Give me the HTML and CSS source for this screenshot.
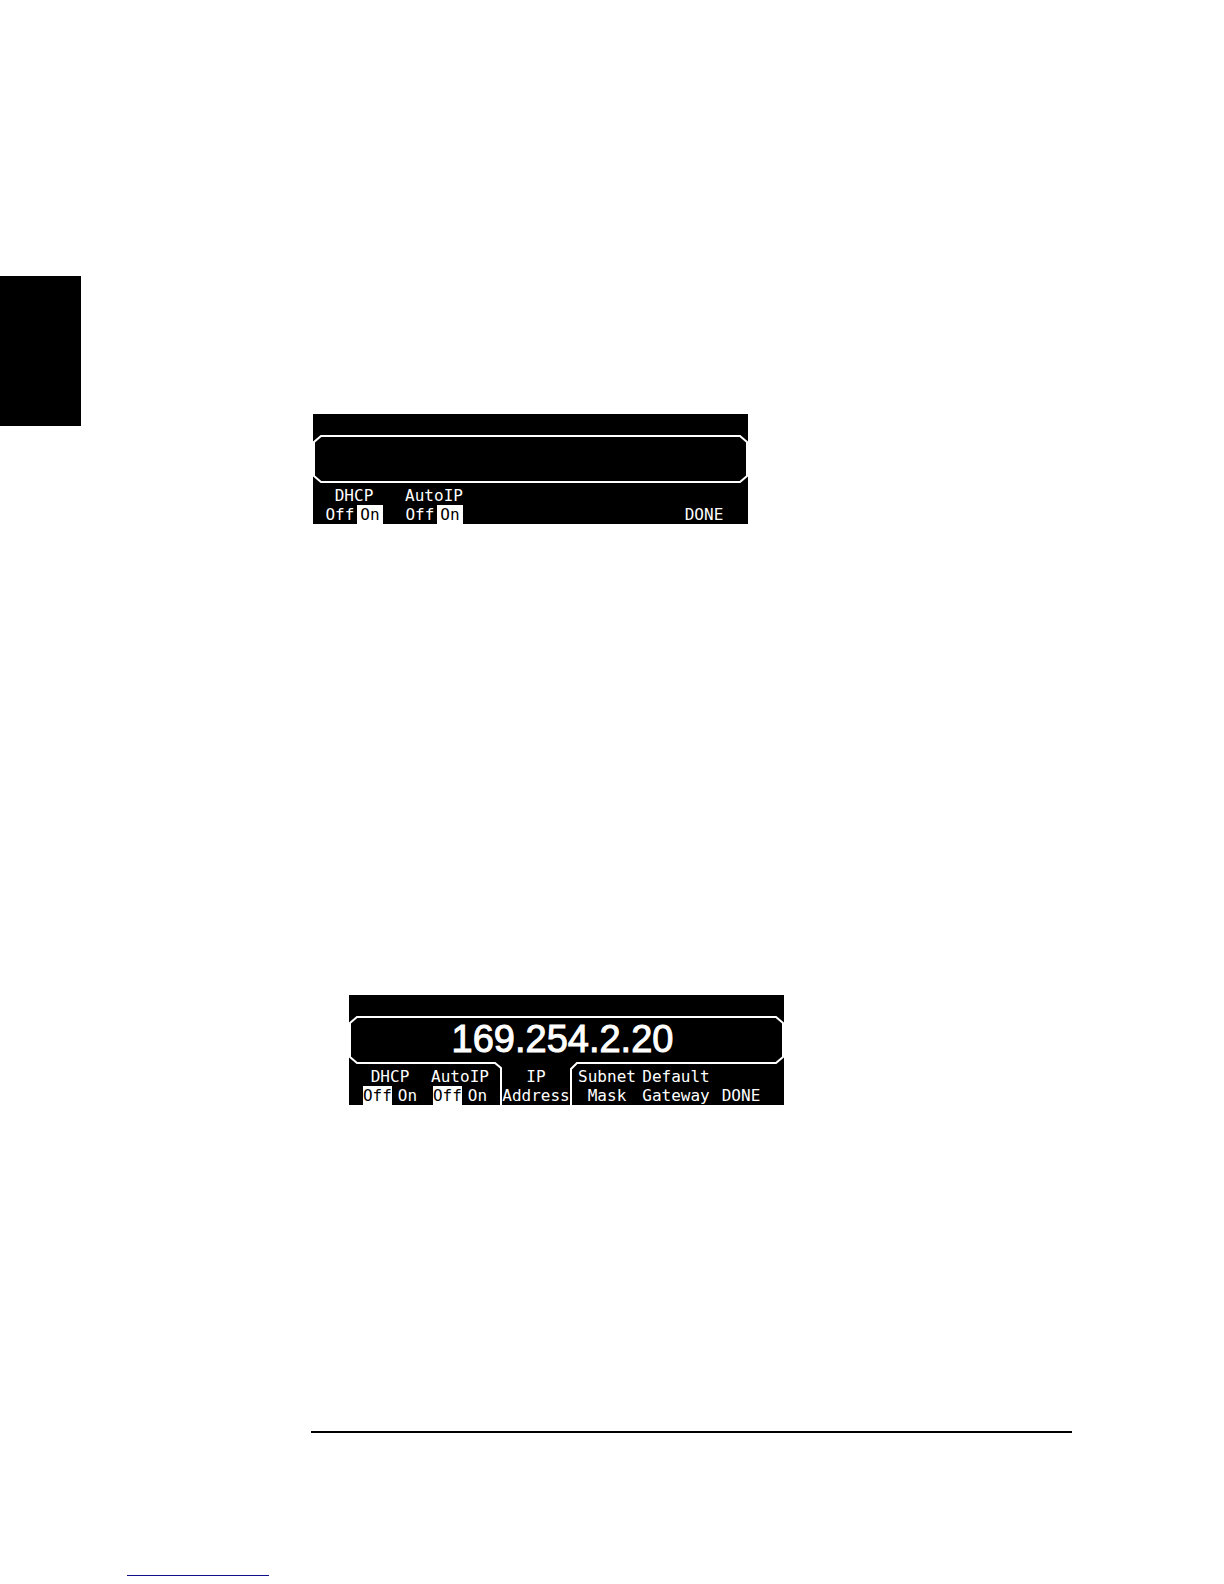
FILE: index.html
```html
<!DOCTYPE html>
<html lang="en">
<head>
<meta charset="utf-8">
<title>IP Address</title>
<link rel="stylesheet" href="styles.css">
</head>
<body>
<div class="sheet">
  <aside class="thumb-tab"></aside>
  <main class="content">
    <section class="display">
      <svg class="outline" viewBox="0 0 435 110" aria-hidden="true">
        <path d="M1 62V28L8 22H427L434 28V62L427 68H8Z"/>
      </svg>
      <div class="readout"></div>
      <div class="keys keys-auto">
        <button class="key" type="button"><span>DHCP</span><span class="toggle"><span>Off</span><span class="selected padded">On</span></span></button>
        <button class="key" type="button"><span>AutoIP</span><span class="toggle"><span>Off</span><span class="selected padded">On</span></span></button>
        <button class="key key-last" type="button"><span>DONE</span></button>
      </div>
    </section>
    <section class="display display-manual">
      <svg class="outline" viewBox="0 0 435 110" aria-hidden="true">
        <path d="M152 110V73L146 68H8L1 62V28L8 22H427L434 28V62L427 68H228L222 74V110"/>
      </svg>
      <div class="readout">169.254.2.20</div>
      <div class="keys keys-manual">
        <button class="key" type="button"><span>DHCP</span><span class="toggle spaced"><span class="selected">Off</span><span>On</span></span></button>
        <button class="key" type="button"><span>AutoIP</span><span class="toggle spaced"><span class="selected">Off</span><span>On</span></span></button>
        <button class="key" type="button"><span>IP</span><span>Address</span></button>
        <button class="key" type="button"><span>Subnet</span><span>Mask</span></button>
        <button class="key" type="button"><span>Default</span><span>Gateway</span></button>
        <button class="key" type="button"><span>DONE</span></button>
      </div>
    </section>
    <hr class="rule">
  </main>
</div>
<footer class="footer"><a class="footer-link" href="#" aria-label="Website"></a></footer>
</body>
</html>
```
FILE: styles.css
```css
* {
  box-sizing: border-box;
}

body {
  margin: 0;
  background: #fff;
  font-family: "Liberation Sans", sans-serif;
}

.sheet {
  display: grid;
  grid-template-columns: 81px minmax(0, 1fr);
  align-items: start;
}

.thumb-tab {
  height: 150px;
  margin-top: 276px;
  background: #000;
}

.content {
  padding: 414px 152px 0 230px;
}

.display {
  position: relative;
  max-width: 435px;
  margin-left: 2px;
  padding-top: 22px;
  background: #000;
  color: #fff;
}

.display-manual {
  margin: 471px 0 326px 38px;
}

.outline {
  position: absolute;
  inset: 0;
  width: 100%;
  height: 100%;
  fill: none;
  stroke: #fff;
  stroke-width: 2;
}

.readout {
  height: 46px;
  margin-bottom: 4px;
  padding-right: 8px;
  font-size: 38px;
  line-height: 44px;
  text-align: center;
  -webkit-text-stroke: 1px #fff;
}

.keys {
  position: relative;
  display: grid;
  min-height: 38px;
}

.keys-auto {
  grid-template-columns: 82fr 78fr 204fr 54fr;
  padding-right: 17px;
}

.keys-manual {
  grid-template-columns: 70fr 70fr 82fr 60fr 78fr 52fr;
  padding: 0 17px 0 6px;
}

.key {
  display: flex;
  flex-direction: column;
  align-items: center;
  justify-content: flex-end;
  min-width: 0;
  padding: 0;
  border: 0;
  background: none;
  color: inherit;
  font: 16px/19px "DejaVu Sans Mono", monospace;
  white-space: nowrap;
}

.key-last {
  grid-column: 4;
}

.toggle {
  display: flex;
  gap: 3px;
}

.spaced {
  gap: 6px;
}

.selected {
  background: #fff;
  color: #000;
}

.padded {
  padding: 0 3px;
}

.rule {
  margin: 0;
  border: 0;
  border-top: 2px solid #000;
}

.footer {
  padding: 142px 0 8px 127px;
}

.footer-link {
  display: block;
  width: 142px;
  border-bottom: 1px solid #11118c;
}
```
